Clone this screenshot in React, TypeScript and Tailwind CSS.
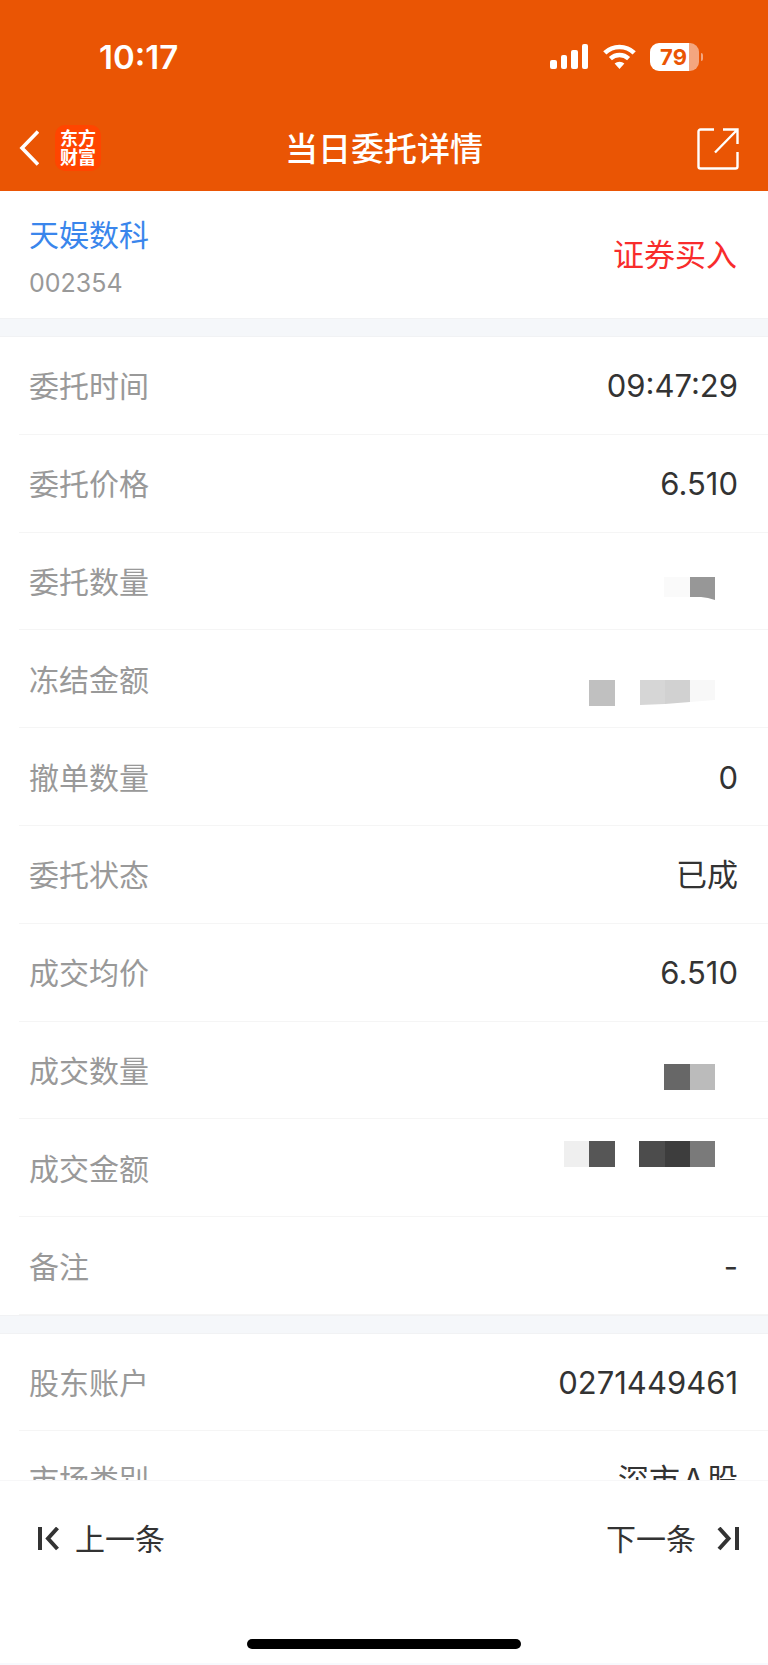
import type { ReactNode } from 'react'

interface Block {
  points: string
  fill: string
}

interface Detail {
  label: string
  value?: string
  blocks?: Block[]
}

const orderDetails: Detail[] = [
  { label: '委托时间', value: '09:47:29' },
  { label: '委托价格', value: '6.510' },
  {
    label: '委托数量',
    blocks: [
      { points: '106,25 132,25 132,45 106,45', fill: '#fafafa' },
      { points: '132,25 157,25 157,48 150,46 143,45 132,45', fill: '#979797' },
    ],
  },
  {
    label: '冻结金额',
    blocks: [
      { points: '31,30 57,30 57,56 31,56', fill: '#c0c0c0' },
      { points: '82,30 107,30 107,54 82,55', fill: '#d6d6d6' },
      { points: '107,30 132,30 132,52 107,54', fill: '#d1d1d1' },
      { points: '132,30 157,30 157,50 132,52', fill: '#f8f8f8' },
    ],
  },
  { label: '撤单数量', value: '0' },
  { label: '委托状态', value: '已成' },
  { label: '成交均价', value: '6.510' },
  {
    label: '成交数量',
    blocks: [
      { points: '106,23 132,23 132,49 106,49', fill: '#676767' },
      { points: '132,23 157,23 157,49 132,49', fill: '#bbbbbb' },
    ],
  },
  {
    label: '成交金额',
    blocks: [
      { points: '6,2 31,2 31,28 6,28', fill: '#efefef' },
      { points: '31,2 57,2 57,28 31,28', fill: '#565656' },
      { points: '81,2 107,2 107,28 81,28', fill: '#4c4c4c' },
      { points: '107,2 132,2 132,28 107,28', fill: '#3d3d3d' },
      { points: '132,2 157,2 157,28 132,28', fill: '#7a7a7a' },
    ],
  },
  { label: '备注', value: '-' },
]

const accountDetails: Detail[] = [
  { label: '股东账户', value: '0271449461' },
  { label: '市场类别', value: '深市\u200AA\u200A股' },
]

function MaskedValue({ blocks }: { blocks: Block[] }) {
  return (
    <svg width="180" height="60" viewBox="0 0 180 60" aria-hidden="true">
      {blocks.map((b) => (
        <polygon key={b.points} points={b.points} fill={b.fill} />
      ))}
    </svg>
  )
}

function DetailRow({ label, value, blocks }: Detail) {
  return (
    <div className="ml-[19px] flex min-h-[88px] items-center justify-between border-b border-[#f5f5f5] pt-[2px] pl-[10px] pr-[30px]">
      <dt className="text-[30px] text-[#999999]">{label}</dt>
      <dd className="text-[#333333]">{blocks ? <MaskedValue blocks={blocks} /> : value}</dd>
    </div>
  )
}

function Divider() {
  return <div className="h-[19px] shrink-0 border-y border-[#f1f2f4] bg-[#f5f7fa]" />
}

function StatusBar() {
  return (
    <div className="flex h-[42px] items-center justify-between pl-[99px] pr-[65px]">
      <span className="text-[33px] leading-none font-semibold">10:17</span>
      <div className="flex items-center gap-[14px]">
        <svg width="39" height="26" viewBox="0 0 39 26" fill="currentColor" aria-hidden="true">
          <rect x="0" y="16" width="7" height="9" rx="2" />
          <rect x="11" y="11" width="6" height="14" rx="2" />
          <rect x="21" y="6" width="7" height="19" rx="2" />
          <rect x="32" y="0" width="6" height="25" rx="2" />
        </svg>
        <svg width="33" height="26" viewBox="0 0 33 26" fill="none" stroke="currentColor" aria-hidden="true">
          <path d="M1.8 8.9a21.2 21.2 0 0 1 29.4 0" strokeWidth="4.6" />
          <path d="M7.4 14.7a13.2 13.2 0 0 1 18.2 0" strokeWidth="4.4" />
          <path d="M11.6 19.6a7.2 7.2 0 0 1 9.8 0L16.5 25z" fill="currentColor" stroke="none" />
        </svg>
        <div className="flex items-center gap-[2px]">
          <div className="flex h-7 w-[49px] items-center justify-center rounded-[9px] bg-linear-to-r from-white from-79% to-[#f4a67f] to-79% pr-[2px] text-[22px] leading-none font-bold text-[#ea5504]">
            79
          </div>
          <div className="h-2 w-[2px] rounded-r-full bg-[#f4a67f]" />
        </div>
      </div>
    </div>
  )
}

function NavBar() {
  return (
    <div className="mt-[29px] grid h-[84px] grid-cols-[1fr_auto_1fr] items-center px-[19px]">
      <div className="flex items-center gap-4 pb-[2px]">
        <button type="button" aria-label="返回">
          <svg width="20" height="36" viewBox="0 0 20 36" fill="none" stroke="currentColor" strokeWidth="3.6" aria-hidden="true">
            <path d="M19 1.5 3 18l16 16.5" />
          </svg>
        </button>
        <div className="flex h-[46px] w-[46px] flex-col items-center justify-center rounded-[10px] bg-[#ff4500] text-[18px] leading-[19px] font-bold">
          <span>东方</span>
          <span>财富</span>
        </div>
      </div>
      <h1 className="text-[33px] leading-none font-medium">当日委托详情</h1>
      <button type="button" aria-label="分享" className="mr-[10px] justify-self-end">
        <svg width="42" height="42" viewBox="0 0 42 42" fill="none" stroke="currentColor" strokeWidth="2.4" aria-hidden="true">
          <path d="M17 1.5H3.5a2 2 0 0 0-2 2v35a2 2 0 0 0 2 2h35a2 2 0 0 0 2-2V24" />
          <path d="M26 1.5h14.5V16M40 2 18 24.5" />
        </svg>
      </button>
    </div>
  )
}

function PagerButton({ children }: { children: ReactNode }) {
  return (
    <button type="button" className="flex items-center gap-4 text-[30px]">
      {children}
    </button>
  )
}

export default function App() {
  return (
    <div className="flex min-h-screen flex-col bg-white font-['Inter','Noto_Sans_CJK_SC',sans-serif] text-[31px] leading-[42px]">
      <header className="shrink-0 bg-[#ea5504] pt-9 text-white">
        <StatusBar />
        <NavBar />
      </header>

      <main className="flex flex-1 flex-col">
        <section className="flex shrink-0 items-center justify-between pt-[23px] pr-[31px] pb-[19px] pl-[29px]">
          <div>
            <a href="#stock" className="block text-[30px] text-[#3a86ec]">
              天娱数科
            </a>
            <p className="mt-[11px] text-[25px] leading-8 text-[#999999]">002354</p>
          </div>
          <span className="pb-1 text-[#f82c2c]">证券买入</span>
        </section>

        <Divider />

        <dl className="grid flex-1 auto-rows-fr">
          {orderDetails.map((d) => (
            <DetailRow key={d.label} {...d} />
          ))}
        </dl>

        <Divider />

        {/* the second card runs on underneath the pager */}
        <dl className="grid max-h-[146px] shrink-0 auto-rows-[97px] overflow-hidden">
          {accountDetails.map((d) => (
            <DetailRow key={d.label} {...d} />
          ))}
        </dl>
      </main>

      <footer className="shrink-0 border-t border-b-2 border-t-[#f7f7f8] border-b-[#f8f9fd] text-[#333333]">
        <div className="flex items-center justify-between pt-[37px] pr-7 pl-[37px]">
          <PagerButton>
            <svg width="22" height="24" viewBox="0 0 22 24" fill="none" stroke="currentColor" strokeWidth="4" aria-hidden="true">
              <path d="M3 0v23M20.5 1 11 11.5l9.5 10.5" />
            </svg>
            上一条
          </PagerButton>
          <PagerButton>
            下一条
            <svg width="28" height="24" viewBox="0 0 28 24" fill="none" stroke="currentColor" strokeWidth="4" aria-hidden="true">
              <path d="M25 0v23M7 1l9.5 10.5L7 22" />
            </svg>
          </PagerButton>
        </div>
        <div className="mx-auto mt-[79px] mb-[14px] h-[10px] w-[274px] rounded-full bg-black" />
      </footer>
    </div>
  )
}
